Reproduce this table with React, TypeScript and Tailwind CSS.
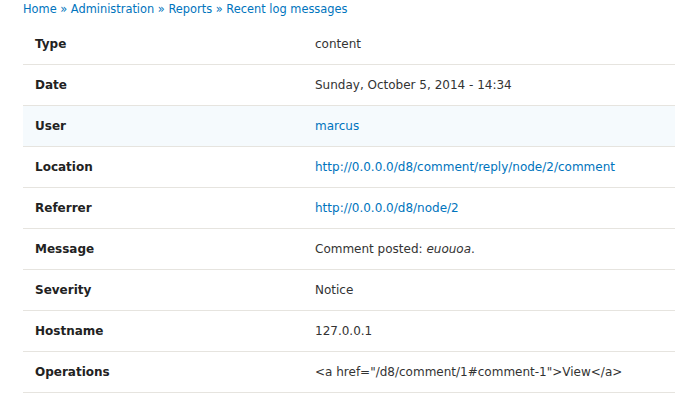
import React from 'react';

const rows: { label: string; value: React.ReactNode; hl?: boolean }[] = [
  { label: 'Type', value: 'content' },
  { label: 'Date', value: 'Sunday, October 5, 2014 - 14:34' },
  { label: 'User', value: <a className="text-[#0074bd]">marcus</a>, hl: true },
  { label: 'Location', value: <a className="text-[#0074bd]">http://0.0.0.0/d8/comment/reply/node/2/comment</a> },
  { label: 'Referrer', value: <a className="text-[#0074bd]">http://0.0.0.0/d8/node/2</a> },
  { label: 'Message', value: <>Comment posted: <em>euouoa</em>.</> },
  { label: 'Severity', value: 'Notice' },
  { label: 'Hostname', value: '127.0.0.1' },
  { label: 'Operations', value: '<a href="/d8/comment/1#comment-1">View</a>' },
];

export default function App() {
  return (
    <div className="w-[675px] h-[404px] bg-white overflow-hidden font-['DejaVu_Sans',sans-serif] text-[#333]">
      {/* Breadcrumb */}
      <nav className="pl-[23px] h-[24px] pt-[2px] text-[11.4px] leading-[14px] text-[#0074bd]">
        Home » Administration » Reports » Recent log messages
      </nav>

      {/* Log details */}
      <div className="ml-[23px]">
        {rows.map((r) => (
          <div
            key={r.label}
            className={`flex items-center h-[41px] border-b border-[#e6e4df] text-[12px] ${r.hl ? 'bg-[#f5fafd]' : ''}`}
          >
            <div className="w-[292px] pl-[12px] font-bold text-[#222]">{r.label}</div>
            <div className="flex-1">{r.value}</div>
          </div>
        ))}
      </div>
    </div>
  );
}
